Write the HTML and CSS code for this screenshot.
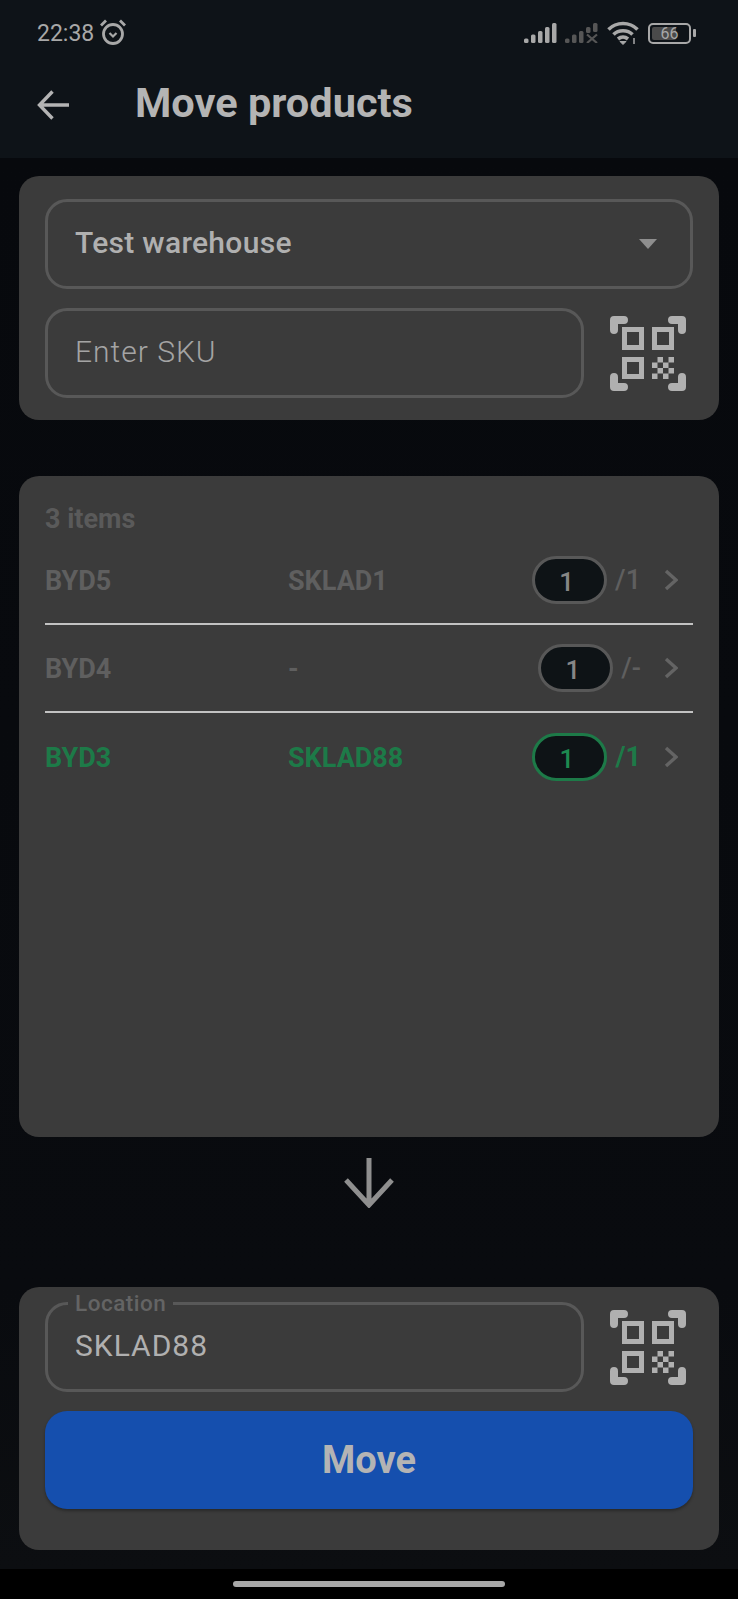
FILE: index.html
```html
<!DOCTYPE html>
<html lang="en">
	<head>
		<meta charset="UTF-8">
		<title>Move products</title>
		<link rel="stylesheet" href="styles.css">
	</head>
	<body>
		<svg class="defs" width="0" height="0">
			<symbol id="qr" viewBox="0 0 76 75">
				<path d="M4 14V4H14M62 4H72V14M4 61V71H14M62 71H72V61" fill="none" stroke="currentColor" stroke-width="8" stroke-linecap="round" stroke-linejoin="round"/>
				<path d="M12 11H34V34H12ZM17 16V29H29V16ZM42 11H64V34H42ZM47 16V29H59V16ZM12 41H34V63H12ZM17 46V58H29V46Z" fill="currentColor" fill-rule="evenodd"/>
				<path d="M47.5 41H53V46.5H47.5ZM58.500 41H64V46.500H58.500ZM42 46.500H47.500V52H42ZM53 46.500H58.500V52H53ZM47.500 52H53V57.500H47.500ZM58.500 52H64V57.500H58.500ZM42 57.500H47.500V63H42ZM53 57.500H58.500V63H53Z" fill="currentColor"/>
			</symbol>
		</svg>

		<div class="screen">
			<header class="top">
				<div class="status">
					<span class="time">22:38</span>
					<svg class="alarm" viewBox="0 0 28 28" fill="none" stroke="currentColor">
						<circle cx="14" cy="16" r="9.500" stroke-width="2.800"/>
						<path d="M10.500 15L14 18.500L17.500 15" stroke-width="2.200"/>
						<path d="M2 7.500L7 2.500M26 7.500L21 2.500" stroke-width="2.800"/>
					</svg>
					<div class="status-right">
						<svg class="signal" viewBox="0 0 33 20" fill="currentColor">
							<rect x="0" y="15.500" width="4.500" height="4.500" rx="1.500"/>
							<rect x="7" y="11.500" width="4.500" height="8.500" rx="1.500"/>
							<rect x="14" y="8" width="4.500" height="12" rx="1.500"/>
							<rect x="21" y="4" width="4.500" height="16" rx="1.500"/>
							<rect x="28" y="0" width="4.500" height="20" rx="1.500"/>
						</svg>
						<svg class="signal dim" viewBox="0 0 33 20" fill="currentColor">
							<rect x="0" y="15.500" width="4.500" height="4.500" rx="1.500"/>
							<rect x="7" y="11.500" width="4.500" height="8.500" rx="1.500"/>
							<rect x="14" y="8" width="4.500" height="12" rx="1.500"/>
							<rect x="21" y="4" width="4.500" height="6" rx="1.500"/>
							<rect x="28" y="0" width="4.500" height="9" rx="1.500"/>
							<path d="M22 11.500L32 20M32 11.500L22 20" fill="none" stroke="currentColor" stroke-width="2.200"/>
						</svg>
						<svg class="wifi" viewBox="0 0 32 24" fill="none" stroke="currentColor" stroke-width="3.600">
							<path d="M1.500 8.500C9.500 0.500 22.500 0.500 30.500 8.500"/>
							<path d="M6.500 13.500C11.500 8.500 20.500 8.500 25.500 13.500"/>
							<path d="M11 18C14 15.500 18 15.500 21 18"/>
							<path d="M13 20.500L16 23.500L19 20.500Z" fill="currentColor" stroke-width="1"/>
							<path d="M27 17V23" stroke-width="1.500"/>
						</svg>
						<div class="battery">
							<div class="battery-body">
								<div class="battery-fill"></div>
								<span class="battery-text">66</span>
							</div>
							<div class="battery-nub"></div>
						</div>
					</div>
				</div>
				<div class="toolbar">
					<svg class="back" viewBox="0 0 32 30" fill="none" stroke="currentColor" stroke-width="3.400">
						<path d="M15.500 1.500L2.500 15L15.500 28.500M2.500 15H32"/>
					</svg>
					<h1 class="title">Move products</h1>
				</div>
			</header>

			<main class="main">
				<section class="card search-card">
					<div class="field select">
						<span class="select-text">Test warehouse</span>
						<span class="caret"></span>
					</div>
					<div class="input-row">
						<div class="field input">
							<span class="placeholder">Enter SKU</span>
						</div>
						<svg class="qr"><use href="#qr"/></svg>
					</div>
				</section>

				<section class="card list-card">
					<div class="list-head">3 items</div>
					<div class="row">
						<span class="sku">BYD5</span>
						<span class="place">SKLAD1</span>
						<div class="qty">
							<span class="pill">1</span>
							<span class="total">/1</span>
							<svg class="chevron" viewBox="0 0 14 22" fill="none" stroke="currentColor" stroke-width="3.400"><path d="M2 2L12 11L2 20"/></svg>
						</div>
					</div>
					<div class="row">
						<span class="sku">BYD4</span>
						<span class="place">-</span>
						<div class="qty">
							<span class="pill">1</span>
							<span class="total">/-</span>
							<svg class="chevron" viewBox="0 0 14 22" fill="none" stroke="currentColor" stroke-width="3.400"><path d="M2 2L12 11L2 20"/></svg>
						</div>
					</div>
					<div class="row done">
						<span class="sku">BYD3</span>
						<span class="place">SKLAD88</span>
						<div class="qty">
							<span class="pill">1</span>
							<span class="total">/1</span>
							<svg class="chevron" viewBox="0 0 14 22" fill="none" stroke="currentColor" stroke-width="3.400"><path d="M2 2L12 11L2 20"/></svg>
						</div>
					</div>
				</section>

				<div class="down">
					<svg class="down-arrow" viewBox="0 0 50 50" fill="none" stroke="currentColor" stroke-width="5">
						<path d="M25 0V47M2 22L25 47L48 22"/>
					</svg>
				</div>

				<section class="card move-card">
					<div class="input-row">
						<div class="field input">
							<span class="field-label">Location</span>
							<span class="value">SKLAD88</span>
						</div>
						<svg class="qr"><use href="#qr"/></svg>
					</div>
					<button class="move">Move</button>
				</section>
			</main>

			<footer class="nav">
				<div class="nav-handle"></div>
			</footer>
		</div>
	</body>
</html>
```

FILE: styles.css
```css
* {
	box-sizing: border-box;
}

html {
	font-family: Roboto, "Liberation Sans", sans-serif;
}

body {
	margin: 0;
	background-color: #000;
	color: #b0b0b0;
}

.defs {
	position: absolute;
}

.screen {
	display: flex;
	flex-direction: column;
	height: 1599px;
	overflow: hidden;
}

/* top bar */
.top {
	height: 158px;
	background-color: #0e1318;
}

.status {
	display: flex;
	align-items: center;
	height: 66px;
	padding-left: 37px;
	padding-right: 42px;
}

.time {
	font-size: 23px;
	color: #a8a8a8;
}

.alarm {
	width: 28px;
	height: 28px;
	margin-left: 5px;
	margin-bottom: 3px;
	color: #a8a8a8;
}

.status-right {
	display: flex;
	align-items: center;
	margin-left: auto;
}

.signal {
	width: 33px;
	height: 20px;
	color: #a8a8a8;
}

.signal.dim {
	margin-left: 8px;
	color: #565656;
}

.wifi {
	width: 32px;
	height: 24px;
	margin-left: 9px;
	color: #a8a8a8;
}

.battery {
	display: flex;
	align-items: center;
	margin-left: 9px;
}

.battery-body {
	position: relative;
	display: flex;
	align-items: center;
	justify-content: center;
	width: 43px;
	height: 21px;
	border: 2px solid #a8a8a8;
	border-radius: 5px;
}

.battery-fill {
	position: absolute;
	left: 2px;
	top: 2px;
	bottom: 2px;
	width: 24px;
	border-radius: 2px;
	background-color: #4a4a4a;
}

.battery-text {
	position: relative;
	font-size: 16px;
	color: #a8a8a8;
}

.battery-nub {
	width: 3px;
	height: 8px;
	margin-left: 2px;
	border-radius: 1px;
	background-color: #a8a8a8;
}

.toolbar {
	display: flex;
	align-items: center;
	height: 74px;
	padding-left: 37px;
}

.back {
	width: 32px;
	height: 30px;
	margin-top: 4px;
	color: #b4b4b4;
}

.title {
	margin: 0 0 2px 66px;
	font-size: 41.500px;
	font-weight: 700;
	color: #b4b4b4;
}

/* content */
.main {
	flex: 1;
	display: flex;
	flex-direction: column;
	padding: 18px 19px 19px;
	background: linear-gradient(#07090d, #090b0f 80%, #0c0e11);
}

.card {
	background-color: #3b3b3b;
	border-radius: 20px;
	padding-left: 26px;
	padding-right: 26px;
}

.search-card {
	height: 244px;
	padding-top: 23px;
}

.list-card {
	height: 661px;
	margin-top: 56px;
}

.move-card {
	height: 263px;
	padding-top: 15px;
}

.field {
	position: relative;
	display: flex;
	align-items: center;
	height: 90px;
	border: 3px solid #585858;
	border-radius: 22px;
	padding-left: 27px;
	font-size: 30px;
}

.select {
	justify-content: space-between;
	padding-right: 33px;
	margin-bottom: 19px;
}

.select-text {
	font-weight: 500;
	letter-spacing: 0.3px;
	margin-bottom: 4px;
}

.caret {
	width: 0;
	height: 0;
	border-left: 9.500px solid transparent;
	border-right: 9.500px solid transparent;
	border-top: 10px solid #8e8e8e;
}

.input-row {
	display: flex;
	align-items: center;
}

.input {
	width: 539px;
	letter-spacing: 1px;
}

.placeholder {
	font-weight: 300;
	color: #a4a4a4;
	margin-bottom: 4px;
}

.value {
	color: #b0b0b0;
	margin-bottom: 4px;
}

.field-label {
	position: absolute;
	left: 20px;
	top: -14px;
	padding: 0 7px;
	background-color: #3b3b3b;
	font-size: 22.500px;
	line-height: 24px;
	font-weight: 500;
	letter-spacing: 0.5px;
	color: #646464;
}

.qr {
	width: 76px;
	height: 75px;
	margin-left: 26px;
	color: #b0b0b0;
}

/* list */
.list-head {
	height: 61px;
	padding-top: 28px;
	font-size: 27px;
	line-height: 30px;
	font-weight: 700;
	color: #5a5a5a;
}

.row {
	display: flex;
	align-items: center;
	height: 88px;
	border-bottom: 2px solid #c2c2c2;
	font-size: 27px;
	font-weight: 700;
	color: #5f5f5f;
}

.row.done {
	border-bottom: none;
	color: #1d7a48;
}

.sku,
.place {
	padding-top: 2px;
}

.sku {
	width: 243px;
}

.qty {
	display: flex;
	align-items: center;
	margin-left: auto;
	padding-right: 15px;
}

.pill {
	display: flex;
	align-items: center;
	justify-content: center;
	width: 75px;
	height: 48px;
	border: 3px solid #585858;
	border-radius: 24px;
	padding-right: 6px;
	padding-top: 3px;
	background-color: #0e1316;
	font-weight: 500;
	font-size: 26px;
	color: #868686;
}

.total {
	margin-left: 8px;
	font-weight: 500;
	font-size: 27px;
}

.chevron {
	width: 14px;
	height: 22px;
	margin-left: 23px;
	color: #646464;
}

.done .pill {
	border-color: #1d7a48;
	color: #1d8a50;
}

.done .total {
	font-weight: 700;
}

.down {
	height: 150px;
	padding-top: 21px;
	display: flex;
	justify-content: center;
	align-items: flex-start;
}

.down-arrow {
	width: 50px;
	height: 50px;
	color: #8f8f8f;
}

.move {
	display: block;
	width: 100%;
	height: 98px;
	margin-top: 19px;
	border: none;
	border-radius: 22px;
	background-color: #154fae;
	box-shadow: rgba(0, 0, 0, 0.3) 0px 2px 3px;
	font-family: inherit;
	font-size: 38px;
	font-weight: 700;
	color: #b4b4b4;
}

/* system nav */
.nav {
	display: flex;
	justify-content: center;
	height: 30px;
	padding-top: 12px;
	background-color: #000;
}

.nav-handle {
	width: 272px;
	height: 6px;
	border-radius: 3px;
	background-color: #a8a8a8;
}
```
